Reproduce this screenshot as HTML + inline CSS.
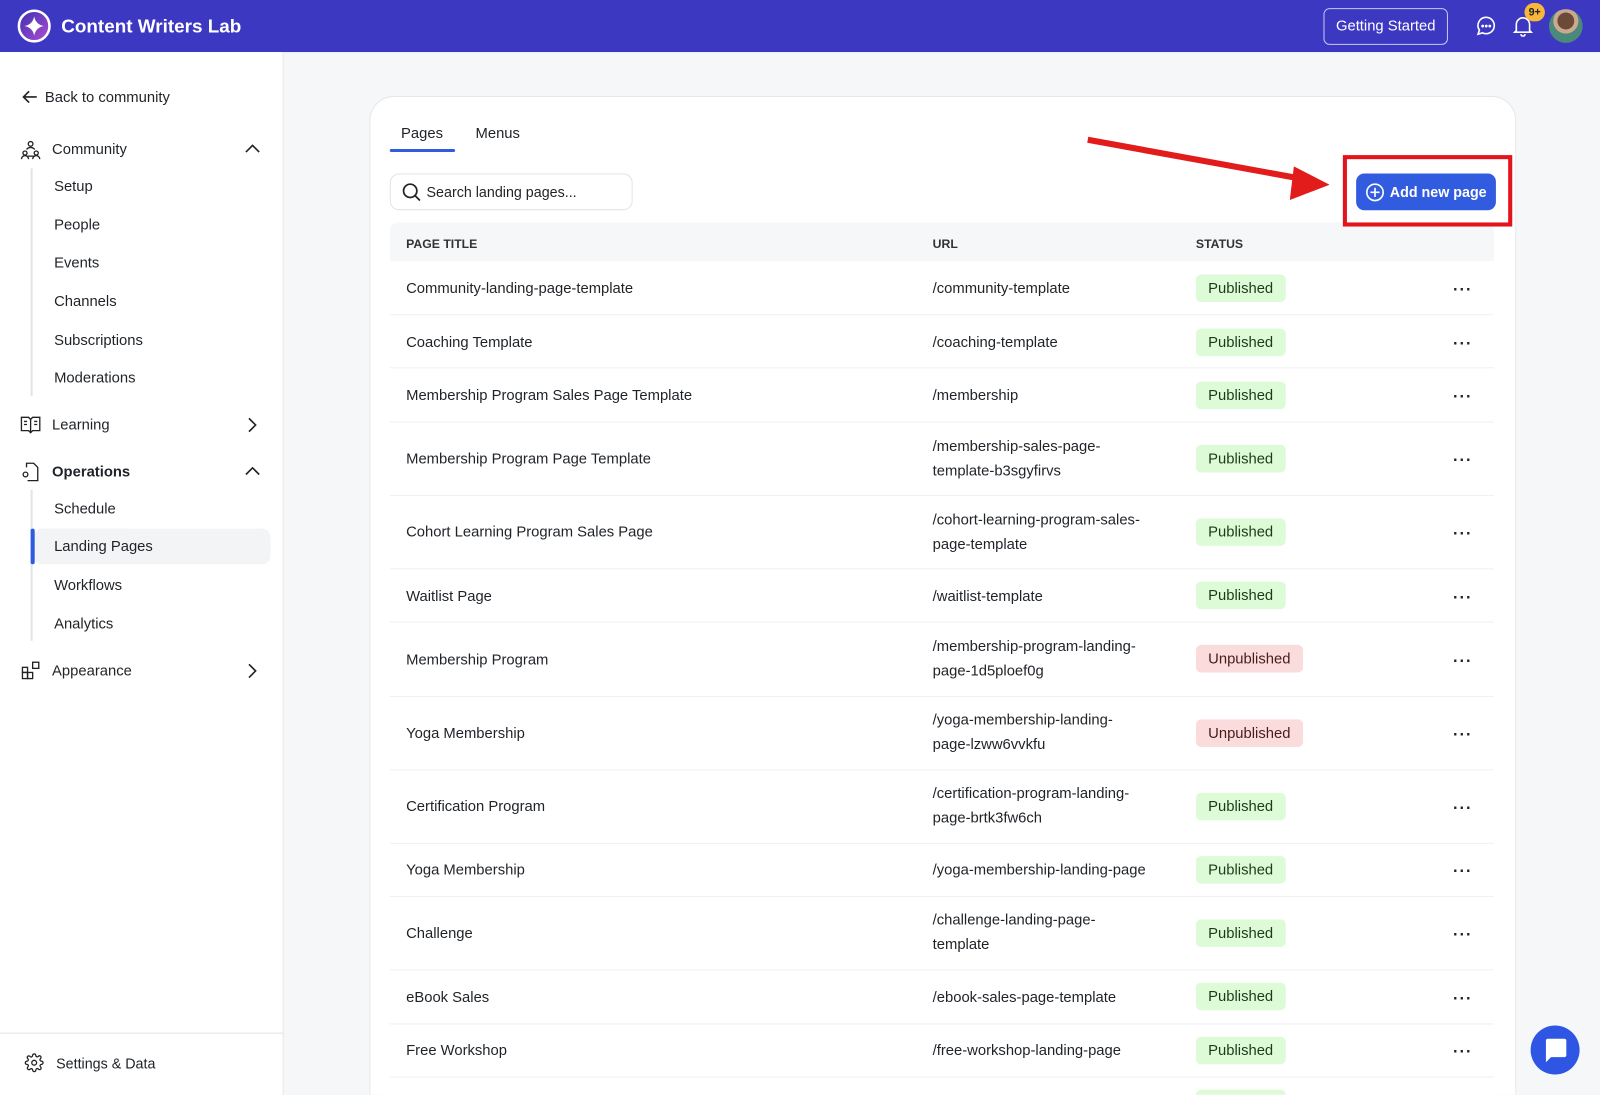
<!DOCTYPE html>
<html><head><meta charset="utf-8"><style>
*{box-sizing:border-box;margin:0;padding:0}
html,body{width:1600px;height:1095px;overflow:hidden;background:#f6f7f9;font-family:"Liberation Sans",Arial,sans-serif;color:#1f2328}
#w{position:absolute;left:0;top:0;width:1568px;height:1073px;overflow:hidden;transform:scale(1.020408);transform-origin:0 0;background:#f6f7f9}
.a{position:absolute}
.hdr{left:0;top:0;width:1568px;height:51px;background:#3d38c2}
.side{left:0;top:51px;width:278px;height:1022px;background:#fff;border-right:1px solid #e6e7ea}
.t{position:absolute;font-size:14.5px;white-space:nowrap;line-height:18px}
.card{left:362px;top:94px;width:1124px;height:979px;background:#fff;border:1px solid #e6e7ea;border-bottom:none;border-radius:24px 24px 0 0}
.row{position:absolute;left:382px;width:1082px;border-bottom:1px solid #eeeff1;background:#fff}
.row .c{position:absolute;font-size:14.5px;line-height:24px;white-space:nowrap}
.b{position:absolute;left:790px;height:27px;border-radius:5px;font-size:14.5px;line-height:28px;padding:0 12px}
.pub{background:#dcfbd6;color:#1d3b1a}
.un{background:#fbdcdc;color:#4a1b1b}
.dots{position:absolute;left:1042px;font-size:16px;font-weight:bold;letter-spacing:1px}
</style></head><body><div id="w">
<div class="a hdr">
 <svg class="a" style="left:17px;top:9px" width="33" height="33" viewBox="0 0 33 33"><defs><linearGradient id="g" x1="0" y1="0" x2="1" y2="1"><stop offset="0" stop-color="#3a2fb0"/><stop offset="1" stop-color="#b04ed0"/></linearGradient></defs><circle cx="16.5" cy="16.5" r="15" fill="url(#g)" stroke="#fff" stroke-width="2.5"/><path d="M16.5 7 Q18 15 26 16.5 Q18 18 16.5 26 Q15 18 7 16.5 Q15 15 16.5 7Z" fill="#fff"/></svg>
 <div class="t" style="left:60px;top:15px;color:#fff;font-size:18.5px;font-weight:bold;line-height:22px">Content Writers Lab</div>
 <div class="a" style="left:1297px;top:8px;width:122px;height:36px;border:1px solid #c9c7f0;border-radius:6px;color:#fff;font-size:14.5px;line-height:34px;text-align:center">Getting Started</div>
 <svg class="a" style="left:1446px;top:15px" width="21" height="21" viewBox="0 0 21 21" fill="none" stroke="#fff" stroke-width="1.6"><path d="M10.5 2a8 8 0 1 1-3.6 15.2L2.5 18.5l1.3-4A8 8 0 0 1 10.5 2z"/><circle cx="7" cy="10.5" r=".6" fill="#fff"/><circle cx="10.5" cy="10.5" r=".6" fill="#fff"/><circle cx="14" cy="10.5" r=".6" fill="#fff"/></svg>
 <svg class="a" style="left:1482px;top:14px" width="21" height="22" viewBox="0 0 21 22" fill="none" stroke="#fff" stroke-width="1.6"><path d="M4 16V10a6.5 6.5 0 0 1 13 0v6l1.5 1.5h-16z"/><path d="M8.5 19.5a2 2 0 0 0 4 0"/></svg>
 <div class="a" style="left:1494px;top:3px;width:20px;height:18px;border-radius:9px;background:#f6b73c;color:#222;font-size:10.5px;font-weight:bold;text-align:center;line-height:18px">9+</div>
 <div class="a" style="left:1518px;top:9px;width:33px;height:33px;border-radius:50%;background:radial-gradient(circle at 50% 35%,#6b4a3a 0 30%,#caa98f 31% 45%,#4a8a7a 46%)"></div>
</div>
<div class="a side"></div>
<svg class="a" style="left:21px;top:87px" width="16" height="16" viewBox="0 0 16 16" fill="none" stroke="#222" stroke-width="1.6"><path d="M15 8H2M7.5 2.5 2 8l5.5 5.5"/></svg>
<div class="t" style="left:44px;top:87px">Back to community</div>
<svg class="a" style="left:20px;top:137px" width="20" height="20" viewBox="0 0 20 20" fill="none" stroke="#222" stroke-width="1.3"><circle cx="10" cy="4" r="2.3"/><circle cx="4.5" cy="13" r="2"/><circle cx="15.5" cy="13" r="2"/><path d="M6 9.5a5 5 0 0 1 8 0M1 19a3.5 3.5 0 0 1 7 0M12 19a3.5 3.5 0 0 1 7 0M7 16h6"/></svg>
<div class="t" style="left:51px;top:138px">Community</div>
<svg class="a" style="left:240px;top:141px" width="15" height="10" viewBox="0 0 15 10" fill="none" stroke="#222" stroke-width="1.6"><path d="M1 8l6.5-6.5L14 8"/></svg>
<div class="a" style="left:30px;top:165px;width:2px;height:223px;background:#e2e3e6"></div>
<div class="t" style="left:53px;top:174px">Setup</div>
<div class="t" style="left:53px;top:212px">People</div>
<div class="t" style="left:53px;top:249px">Events</div>
<div class="t" style="left:53px;top:287px">Channels</div>
<div class="t" style="left:53px;top:325px">Subscriptions</div>
<div class="t" style="left:53px;top:362px">Moderations</div>
<svg class="a" style="left:20px;top:408px" width="20" height="17" viewBox="0 0 20 17" fill="none" stroke="#222" stroke-width="1.3"><path d="M1 1h7l2 2 2-2h7v13h-7l-2 2-2-2H1z M10 3v13"/><path d="M3.5 5h3M3.5 8h3M13.5 5h3M13.5 8h3"/></svg>
<div class="t" style="left:51px;top:408px">Learning</div>
<svg class="a" style="left:242px;top:409px" width="10" height="15" viewBox="0 0 10 15" fill="none" stroke="#222" stroke-width="1.6"><path d="M2 1l6.5 6.5L2 14"/></svg>
<svg class="a" style="left:21px;top:452px" width="18" height="20" viewBox="0 0 18 20" fill="none" stroke="#222" stroke-width="1.3"><path d="M5 6V2h7l4 4v13H6"/><circle cx="4" cy="13" r="2.3"/></svg>
<div class="t" style="left:51px;top:454px;font-weight:bold">Operations</div>
<svg class="a" style="left:240px;top:457px" width="15" height="10" viewBox="0 0 15 10" fill="none" stroke="#222" stroke-width="1.6"><path d="M1 8l6.5-6.5L14 8"/></svg>
<div class="a" style="left:30px;top:480px;width:2px;height:148px;background:#e2e3e6"></div>
<div class="a" style="left:33px;top:518px;width:232px;height:35px;background:#f3f4f6;border-radius:8px"></div>
<div class="a" style="left:30px;top:518px;width:4px;height:35px;background:#2f5be0;border-radius:2px"></div>
<div class="t" style="left:53px;top:490px">Schedule</div>
<div class="t" style="left:53px;top:527px">Landing Pages</div>
<div class="t" style="left:53px;top:565px">Workflows</div>
<div class="t" style="left:53px;top:603px">Analytics</div>
<svg class="a" style="left:21px;top:648px" width="18" height="18" viewBox="0 0 18 18" fill="none" stroke="#222" stroke-width="1.3"><rect x="1" y="6" width="5" height="5"/><rect x="1" y="11" width="5" height="6"/><rect x="6" y="11" width="5" height="6"/><rect x="11" y="1" width="6" height="6"/></svg>
<div class="t" style="left:51px;top:649px">Appearance</div>
<svg class="a" style="left:242px;top:650px" width="10" height="15" viewBox="0 0 10 15" fill="none" stroke="#222" stroke-width="1.6"><path d="M2 1l6.5 6.5L2 14"/></svg>
<div class="a" style="left:0;top:1012px;width:278px;height:1px;background:#e2e3e6"></div>
<svg class="a" style="left:24px;top:1032px" width="19" height="19" viewBox="0 0 24 24" fill="none" stroke="#222" stroke-width="1.6"><circle cx="12" cy="12" r="3"/><path d="M19.4 15a1.7 1.7 0 0 0 .3 1.8l.1.1a2 2 0 1 1-2.8 2.8l-.1-.1a1.7 1.7 0 0 0-1.8-.3 1.7 1.7 0 0 0-1 1.5V21a2 2 0 1 1-4 0v-.1a1.7 1.7 0 0 0-1.1-1.5 1.7 1.7 0 0 0-1.8.3l-.1.1a2 2 0 1 1-2.8-2.8l.1-.1a1.7 1.7 0 0 0 .3-1.8 1.7 1.7 0 0 0-1.5-1H3a2 2 0 1 1 0-4h.1a1.7 1.7 0 0 0 1.5-1.1 1.7 1.7 0 0 0-.3-1.8l-.1-.1a2 2 0 1 1 2.8-2.8l.1.1a1.7 1.7 0 0 0 1.800.3H9a1.7 1.7 0 0 0 1-1.5V3a2 2 0 1 1 4 0v.1a1.7 1.7 0 0 0 1 1.5 1.7 1.7 0 0 0 1.8-.3l.1-.1a2 2 0 1 1 2.8 2.8l-.1.1a1.7 1.7 0 0 0-.3 1.8V9a1.7 1.7 0 0 0 1.5 1H21a2 2 0 1 1 0 4h-.1a1.7 1.7 0 0 0-1.5 1z"/></svg>
<div class="t" style="left:55px;top:1033px;font-size:14px">Settings &amp; Data</div>

<div class="a card"></div>
<div class="t" style="left:393px;top:122px">Pages</div>
<div class="t" style="left:466px;top:122px">Menus</div>
<div class="a" style="left:382px;top:146px;width:64px;height:3px;background:#2f5be0;border-radius:2px"></div>
<div class="a" style="left:382px;top:170px;width:238px;height:36px;border:1px solid #e3e4e7;border-radius:9px"></div>
<svg class="a" style="left:394px;top:179px" width="19" height="19" viewBox="0 0 19 19" fill="none" stroke="#222" stroke-width="1.7"><circle cx="8" cy="8" r="6.5"/><path d="M13 13l4.5 4.5"/></svg>
<div class="t" style="left:418px;top:179px;font-size:14px">Search landing pages...</div>

<div class="a" style="left:382px;top:218px;width:1082px;height:38px;background:#f6f7f9;border-radius:8px 8px 0 0"></div>
<div class="t" style="left:398px;top:230px;font-size:12px;font-weight:bold;color:#333">PAGE TITLE</div>
<div class="t" style="left:914px;top:230px;font-size:12px;font-weight:bold;color:#333">URL</div>
<div class="t" style="left:1172px;top:230px;font-size:12px;font-weight:bold;color:#333">STATUS</div>

<svg class="a" style="left:0;top:0" width="1568" height="260"><line x1="1066" y1="137" x2="1280" y2="176" stroke="#e21b1b" stroke-width="6"/><polygon points="1303,181 1268,163 1264,196" fill="#e21b1b"/></svg>
<div class="a" style="left:1316px;top:152px;width:166px;height:70px;border:4px solid #e3141b;background:#fff"></div>
<div class="a" style="left:1329px;top:170px;width:137px;height:36px;background:#325ce0;border-radius:8px;color:#fff;font-weight:bold;font-size:14px;line-height:36px;padding-left:33px">Add new page</div>
<svg class="a" style="left:1338px;top:179px" width="19" height="19" viewBox="0 0 19 19" fill="none" stroke="#fff" stroke-width="1.6"><circle cx="9.5" cy="9.5" r="8"/><path d="M9.5 5v9M5 9.5h9"/></svg>

<div class="row" style="top:256px;height:53px"><div class="c" style="left:16px;top:15px">Community-landing-page-template</div><div class="c" style="left:532px;top:15px">/community-template</div><div class="b pub" style="top:13px">Published</div><div class="dots" style="top:20px">···</div></div>
<div class="row" style="top:309px;height:52px"><div class="c" style="left:16px;top:15px">Coaching Template</div><div class="c" style="left:532px;top:15px">/coaching-template</div><div class="b pub" style="top:13px">Published</div><div class="dots" style="top:20px">···</div></div>
<div class="row" style="top:361px;height:53px"><div class="c" style="left:16px;top:15px">Membership Program Sales Page Template</div><div class="c" style="left:532px;top:15px">/membership</div><div class="b pub" style="top:13px">Published</div><div class="dots" style="top:20px">···</div></div>
<div class="row" style="top:414px;height:72px"><div class="c" style="left:16px;top:24px">Membership Program Page Template</div><div class="c" style="left:532px;top:12px">/membership-sales-page-<br>template-b3sgyfirvs</div><div class="b pub" style="top:22px">Published</div><div class="dots" style="top:29px">···</div></div>
<div class="row" style="top:486px;height:72px"><div class="c" style="left:16px;top:24px">Cohort Learning Program Sales Page</div><div class="c" style="left:532px;top:12px">/cohort-learning-program-sales-<br>page-template</div><div class="b pub" style="top:22px">Published</div><div class="dots" style="top:29px">···</div></div>
<div class="row" style="top:558px;height:52px"><div class="c" style="left:16px;top:15px">Waitlist Page</div><div class="c" style="left:532px;top:15px">/waitlist-template</div><div class="b pub" style="top:12px">Published</div><div class="dots" style="top:20px">···</div></div>
<div class="row" style="top:610px;height:73px"><div class="c" style="left:16px;top:25px">Membership Program</div><div class="c" style="left:532px;top:12px">/membership-program-landing-<br>page-1d5ploef0g</div><div class="b un" style="top:22px">Unpublished</div><div class="dots" style="top:30px">···</div></div>
<div class="row" style="top:683px;height:72px"><div class="c" style="left:16px;top:24px">Yoga Membership</div><div class="c" style="left:532px;top:11px">/yoga-membership-landing-<br>page-lzww6vvkfu</div><div class="b un" style="top:22px">Unpublished</div><div class="dots" style="top:29px">···</div></div>
<div class="row" style="top:755px;height:72px"><div class="c" style="left:16px;top:24px">Certification Program</div><div class="c" style="left:532px;top:11px">/certification-program-landing-<br>page-brtk3fw6ch</div><div class="b pub" style="top:22px">Published</div><div class="dots" style="top:29px">···</div></div>
<div class="row" style="top:827px;height:52px"><div class="c" style="left:16px;top:14px">Yoga Membership</div><div class="c" style="left:532px;top:14px">/yoga-membership-landing-page</div><div class="b pub" style="top:12px">Published</div><div class="dots" style="top:19px">···</div></div>
<div class="row" style="top:879px;height:72px"><div class="c" style="left:16px;top:24px">Challenge</div><div class="c" style="left:532px;top:11px">/challenge-landing-page-<br>template</div><div class="b pub" style="top:22px">Published</div><div class="dots" style="top:29px">···</div></div>
<div class="row" style="top:951px;height:53px"><div class="c" style="left:16px;top:15px">eBook Sales</div><div class="c" style="left:532px;top:15px">/ebook-sales-page-template</div><div class="b pub" style="top:12px">Published</div><div class="dots" style="top:20px">···</div></div>
<div class="row" style="top:1004px;height:52px"><div class="c" style="left:16px;top:14px">Free Workshop</div><div class="c" style="left:532px;top:14px">/free-workshop-landing-page</div><div class="b pub" style="top:12px">Published</div><div class="dots" style="top:19px">···</div></div>
<div class="row" style="top:1056px;height:17px;border:none;overflow:hidden"><div class="b pub" style="top:12px">Published</div></div>

<div class="a" style="left:1500px;top:1005px;width:48px;height:48px;border-radius:50%;background:#2f55e4"></div>
<svg class="a" style="left:1512px;top:1017px" width="24" height="26" viewBox="0 0 24 26"><path d="M3 1h18a2 2 0 0 1 2 2v14a2 2 0 0 1-2 2H8l-5 5V3a2 2 0 0 1 2-2z" fill="#fff"/></svg>
</div></body></html>
